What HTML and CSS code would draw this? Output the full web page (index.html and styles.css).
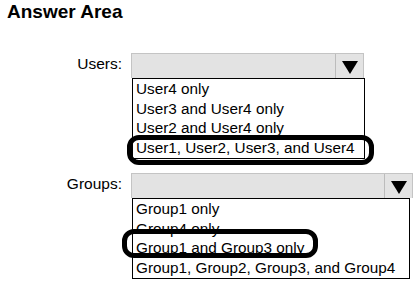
FILE: index.html
```html
<!DOCTYPE html>
<html lang="en">
<head>
  <meta charset="UTF-8">
  <meta name="viewport" content="width=device-width, initial-scale=1.0">
  <title>Answer Area</title>
  <link rel="stylesheet" href="styles.css">
</head>
<body>
  <h1 class="title">Answer Area</h1>

  <div class="answers">
    <div class="field field-users">
      <div class="label">Users:</div>
      <div class="picker">
        <div class="select">
          <div class="select-value"></div>
          <div class="select-arrow"><span class="tri"></span></div>
        </div>
        <ul class="options">
          <li>User4 only</li>
          <li>User3 and User4 only</li>
          <li>User2 and User4 only</li>
          <li class="picked">User1, User2, User3, and User4</li>
        </ul>
      </div>
    </div>

    <div class="field field-groups">
      <div class="label">Groups:</div>
      <div class="picker">
        <div class="select">
          <div class="select-value"></div>
          <div class="select-arrow"><span class="tri"></span></div>
        </div>
        <ul class="options">
          <li>Group1 only</li>
          <li>Group4 only</li>
          <li class="picked">Group1 and Group3 only</li>
          <li>Group1, Group2, Group3, and Group4</li>
        </ul>
      </div>
    </div>
  </div>
</body>
</html>
```

FILE: styles.css
```css
body {
  font-family: "Liberation Sans", Arial, sans-serif;
  margin: 0;
  padding: 0;
  color: #000;
  background-color: #fff;
}

.title {
  margin: 0;
  padding: 1px 0 0 7px;
  font-size: 19px;
  line-height: 22px;
  font-weight: bold;
}

.answers {
  padding-top: 30px; /* select of the first row starts at y=53 */
}

.field {
  display: flex;
  gap: 9px;
}

.field-groups {
  margin-top: 14px;
}

.label {
  width: 122px;
  text-align: right;
  font-size: 15.5px;
  line-height: 21px;
}

.picker {
  display: flex;
  flex-direction: column;
}

.select {
  display: flex;
  height: 25px;
  box-sizing: border-box;
  border: 1px solid #c4c4c4;
  border-bottom: none;
  background-color: #e3e3e3;
}

.select-value {
  flex: 1;
}

.select-arrow {
  width: 28px;
  border-left: 1px solid #bcbcbc;
  display: flex;
  justify-content: center;
  padding-top: 7px;
  box-sizing: border-box;
}

.tri {
  width: 0;
  height: 0;
  border-left: 8px solid transparent;
  border-right: 8px solid transparent;
  border-top: 13px solid #000;
}

.options {
  list-style: none;
  margin: 0 0 0 1px;
  padding: 0;
  border: 1px solid #000;
  font-size: 15.3px;
  line-height: 19.7px;
}

.options li {
  padding-left: 3px;
  position: relative;
  white-space: nowrap;
}

/* hand-drawn answer marks */
.options li.picked::after {
  content: '';
  position: absolute;
  border: 5px solid #000;
  border-radius: 12px;
  box-sizing: border-box;
}

.field-users .select { width: 233px; }
.field-users .options { width: 233px; box-sizing: border-box; }
.field-users .picked::after {
  left: -6px;
  right: -10px;
  top: -3px;
  bottom: -7px;
}

.field-groups .select { width: 282px; }
.field-groups .options { width: 278px; box-sizing: border-box; }
.field-groups .picked::after {
  left: -11px;
  width: 196px;
  top: -9px;
  bottom: 0;
  border-radius: 10px;
}
```
